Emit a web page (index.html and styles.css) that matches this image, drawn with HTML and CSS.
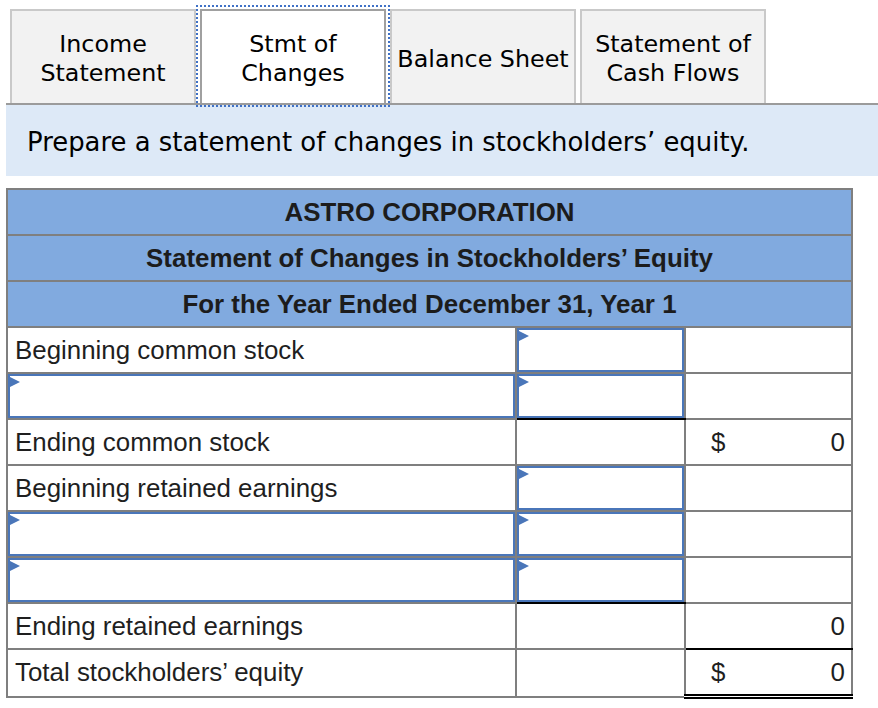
FILE: index.html
```html
<!DOCTYPE html>
<html lang="en">
<head>
<meta charset="utf-8">
<title>Statement of Changes in Stockholders' Equity</title>
<link rel="stylesheet" href="styles.css">
</head>
<body>
<div class="page">
  <div class="tabs">
    <div class="tab">Income<br>Statement</div>
    <div class="tab active">Stmt of<br>Changes</div>
    <div class="tab">Balance Sheet</div>
    <div class="tab">Statement of<br>Cash Flows</div>
  </div>
  <div class="prompt">Prepare a statement of changes in stockholders’ equity.</div>
  <table class="stmt">
    <colgroup>
      <col class="c-label">
      <col class="c-mid">
      <col class="c-amt">
    </colgroup>
    <thead>
      <tr><th colspan="3">ASTRO CORPORATION</th></tr>
      <tr><th colspan="3">Statement of Changes in Stockholders’ Equity</th></tr>
      <tr><th colspan="3">For the Year Ended December 31, Year 1</th></tr>
    </thead>
    <tbody>
      <tr>
        <td class="label">Beginning common stock</td>
        <td class="inp"><div class="field"></div></td>
        <td></td>
      </tr>
      <tr>
        <td class="inp"><div class="field"></div></td>
        <td class="inp ul"><div class="field"></div></td>
        <td></td>
      </tr>
      <tr>
        <td class="label">Ending common stock</td>
        <td></td>
        <td class="amt"><span class="cur">$</span><span class="val">0</span></td>
      </tr>
      <tr>
        <td class="label">Beginning retained earnings</td>
        <td class="inp"><div class="field"></div></td>
        <td></td>
      </tr>
      <tr>
        <td class="inp"><div class="field"></div></td>
        <td class="inp"><div class="field"></div></td>
        <td></td>
      </tr>
      <tr>
        <td class="inp"><div class="field"></div></td>
        <td class="inp ul"><div class="field"></div></td>
        <td></td>
      </tr>
      <tr>
        <td class="label">Ending retained earnings</td>
        <td></td>
        <td class="amt ul"><span class="val">0</span></td>
      </tr>
      <tr>
        <td class="label">Total stockholders’ equity</td>
        <td></td>
        <td class="amt dbl"><span class="cur">$</span><span class="val">0</span></td>
      </tr>
    </tbody>
  </table>
</div>
</body>
</html>
```

FILE: styles.css
```css
html, body {
  margin: 0;
  padding: 0;
  background: #ffffff;
}

.page {
  padding-left: 6px;
  padding-top: 9px;
}

.tabs {
  display: flex;
  gap: 4px;
  padding-left: 4px;
  border-bottom: 2px solid #9b9b9b;
}

.tab {
  box-sizing: border-box;
  width: 186px;
  height: 94px;
  padding-top: 4px;
  display: flex;
  align-items: center;
  justify-content: center;
  text-align: center;
  background: #f2f2f2;
  border: 2px solid #c9c9c9;
  border-bottom: none;
  font-family: "DejaVu Sans", Verdana, sans-serif;
  font-size: 23.8px;
  line-height: 29px;
  color: #000;
}

.tab.active {
  background: #ffffff;
  border-color: #a0a0a0;
  outline: 2px dotted #3f71c6;
  outline-offset: 2px;
}

.prompt {
  box-sizing: border-box;
  height: 71px;
  display: flex;
  align-items: center;
  padding-left: 21px;
  padding-top: 2px;
  background: #dde9f7;
  font-family: "DejaVu Sans", Verdana, sans-serif;
  font-size: 25.9px;
  color: #000;
}

.stmt {
  margin-top: 12px;
  width: 847px;
  border-collapse: collapse;
  table-layout: fixed;
  border: 2px solid #7f7f7f;
  font-family: "Liberation Sans", Arial, sans-serif;
  font-size: 25.9px;
  color: #1f1f1f;
}

.c-label { width: 509px; }
.c-mid { width: 169px; }
.c-amt { width: 167px; }

.stmt th,
.stmt td {
  border: 2px solid #7f7f7f;
  height: 44px;
  padding: 0;
  vertical-align: middle;
}

.stmt th {
  background: #81aadf;
  font-weight: bold;
  text-align: center;
  color: #1c1c1c;
}

.stmt td.label {
  padding-left: 7px;
  white-space: nowrap;
}

.field {
  position: relative;
  box-sizing: border-box;
  width: 100%;
  height: 44px;
  border: 2px solid #4a76b9;
  background: #ffffff;
}

.field::before {
  content: "";
  position: absolute;
  left: 0;
  top: 1px;
  border-left: 10px solid #4a76b9;
  border-top: 5px solid transparent;
  border-bottom: 5px solid transparent;
}

.stmt td.ul {
  border-bottom: 2px solid #000000;
}

.stmt td.amt {
  padding: 0 6px 0 25px;
}

.stmt td.amt .cur {
  float: left;
}

.stmt td.amt .val {
  float: right;
}

.stmt td.dbl {
  border-bottom: 5px double #000000;
}
```
